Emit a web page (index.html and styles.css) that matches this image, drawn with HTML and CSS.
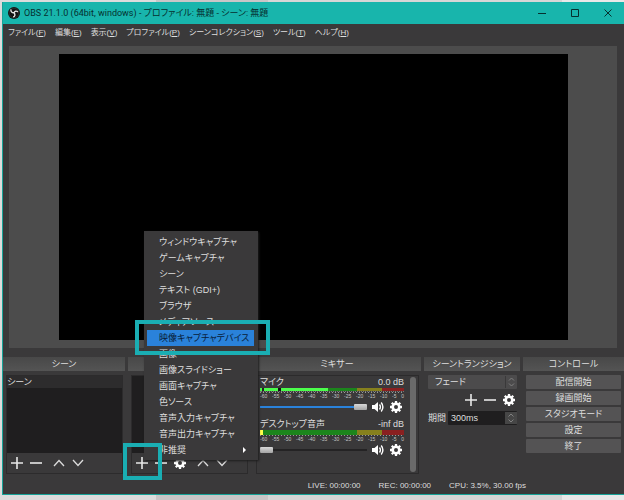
FILE: index.html
```html
<!DOCTYPE html>
<html lang="ja">
<head>
<meta charset="utf-8">
<meta name="viewport" content="width=device-width, initial-scale=1">
<title>OBS 21.1.0</title>
<link rel="stylesheet" href="styles.css">
</head>
<body>
<svg class="sprite" aria-hidden="true">
  <symbol id="plus" viewBox="0 0 12 12"><path d="M6 0v12M0 6h12" fill="none" stroke="#e8e8e8" stroke-width="1.6"/></symbol>
  <symbol id="minus" viewBox="0 0 12 12"><path d="M0 6h12" fill="none" stroke="#e8e8e8" stroke-width="1.6"/></symbol>
  <symbol id="up" viewBox="0 0 12 12"><path d="M1 9l5-5.500 5 5.500" fill="none" stroke="#dcdcdc" stroke-width="1.300"/></symbol>
  <symbol id="down" viewBox="0 0 12 12"><path d="M1 3l5 5.500 5-5.500" fill="none" stroke="#dcdcdc" stroke-width="1.300"/></symbol>
  <symbol id="gear" viewBox="0 0 12 12"><circle cx="6" cy="6" r="3.300" fill="none" stroke="#fff" stroke-width="2.600"/><path d="M6 0v2M6 10v2M0 6h2M10 6h2M1.800 1.800l1.400 1.400M8.800 8.800l1.400 1.400M1.800 10.200l1.400-1.400M8.800 3.200l1.400-1.400" stroke="#fff" stroke-width="2.300"/></symbol>
  <symbol id="speaker" viewBox="0 0 12 12"><path d="M0 4h2.500L6 1v10L2.500 8H0z" fill="#fff"/><path d="M7.500 3.500q1.800 2.500 0 5M9.200 1.500q3.400 4.500 0 9" fill="none" stroke="#fff" stroke-width="1.400"/></symbol>
  <symbol id="spin" viewBox="0 0 8 12"><path d="M1.500 4.500L4 2l2.500 2.500M1.500 7.500L4 10l2.500-2.500" fill="none" stroke="#808080"/></symbol>
</svg>

<div class="window">
  <header class="titlebar">
    <svg class="logo" viewBox="0 0 12 12" aria-hidden="true"><circle cx="6" cy="6" r="6" fill="#111"/><circle cx="6" cy="6" r="4.800" fill="none" stroke="#3c3c3c" stroke-width=".6"/><path d="M3 2.300c-.4 2.200.7 3.500 3 3.500M9.900 4.800C8.200 3.700 6.700 4 6 5.800M5.200 10c1.900-.7 2.300-2.300.8-4.200" fill="none" stroke="#e4e4e4" stroke-width="1.400"/></svg>
    <h1>OBS 21.1.0 (64bit, windows) - プロファイル: 無題 - シーン: 無題</h1>
    <button aria-label="最小化"><svg viewBox="0 0 8 8"><path d="M0 4.500h8"/></svg></button>
    <button aria-label="最大化"><svg viewBox="0 0 8 8"><path d="M.5.5h7v7h-7z"/></svg></button>
    <button aria-label="閉じる"><svg viewBox="0 0 8 8"><path d="M.5.500l7 7M7.500.500l-7 7"/></svg></button>
  </header>

  <nav class="menubar">
    <a href="#">ファイル(<u>F</u>)</a>
    <a href="#">編集(<u>E</u>)</a>
    <a href="#">表示(<u>V</u>)</a>
    <a href="#">プロファイル(<u>P</u>)</a>
    <a href="#">シーンコレクション(<u>S</u>)</a>
    <a href="#">ツール(<u>T</u>)</a>
    <a href="#">ヘルプ(<u>H</u>)</a>
  </nav>

  <main class="preview"><div class="canvas"></div></main>

  <div class="docks">
    <section class="dock">
      <h2>シーン</h2>
      <div class="frame">
        <ul class="list"><li>シーン</li></ul>
        <div class="tools">
          <button aria-label="追加"><svg><use href="#plus"/></svg></button>
          <button aria-label="削除"><svg><use href="#minus"/></svg></button>
          <button class="apart" aria-label="上へ"><svg><use href="#up"/></svg></button>
          <button aria-label="下へ"><svg><use href="#down"/></svg></button>
        </div>
      </div>
    </section>

    <section class="dock" aria-label="ソース">
      <h2></h2>
      <div class="frame">
        <ul class="list"></ul>
        <div class="tools">
          <div class="add">
            <button aria-label="追加"><svg><use href="#plus"/></svg></button>
            <span class="mark mark-add"></span>
          </div>
          <button aria-label="削除"><svg><use href="#minus"/></svg></button>
          <button aria-label="設定"><svg><use href="#gear"/></svg></button>
          <button class="apart" aria-label="上へ"><svg><use href="#up"/></svg></button>
          <button aria-label="下へ"><svg><use href="#down"/></svg></button>
        </div>
      </div>
      <ul class="popup">
        <li><button>ウィンドウキャプチャ</button></li>
        <li><button>ゲームキャプチャ</button></li>
        <li><button>シーン</button></li>
        <li><button>テキスト (GDI+)</button></li>
        <li><button>ブラウザ</button></li>
        <li><button>メディアソース</button></li>
        <li class="picked"><button>映像キャプチャデバイス</button><span class="mark mark-item"></span></li>
        <li><button>画像</button></li>
        <li><button>画像スライドショー</button></li>
        <li><button>画面キャプチャ</button></li>
        <li><button>色ソース</button></li>
        <li><button>音声入力キャプチャ</button></li>
        <li><button>音声出力キャプチャ</button></li>
        <li><button class="more">非推奨</button></li>
      </ul>
    </section>

    <section class="dock">
      <h2>ミキサー</h2>
      <div class="frame mixer">
        <div class="channels">
          <div class="channel">
            <div class="name"><label for="mic">マイク</label><output>0.0 dB</output></div>
            <div class="meter live"><i class="lit"></i><i class="green"></i><i class="olive"></i><i class="red"></i></div>
            <div class="scale"><span>-60</span><span>-55</span><span>-50</span><span>-45</span><span>-40</span><span>-35</span><span>-30</span><span>-25</span><span>-20</span><span>-15</span><span>-10</span><span>-5</span><span>0</span></div>
            <div class="volume">
              <input id="mic" class="full" type="range" value="100">
              <button aria-label="ミュート"><svg><use href="#speaker"/></svg></button>
              <button aria-label="設定"><svg><use href="#gear"/></svg></button>
            </div>
          </div>
          <div class="channel">
            <div class="name"><label for="desk">デスクトップ音声</label><output>-inf dB</output></div>
            <div class="meter idle"><i class="peak"></i><i class="green"></i><i class="olive"></i><i class="red"></i></div>
            <div class="scale"><span>-60</span><span>-55</span><span>-50</span><span>-45</span><span>-40</span><span>-35</span><span>-30</span><span>-25</span><span>-20</span><span>-15</span><span>-10</span><span>-5</span><span>0</span></div>
            <div class="volume">
              <input id="desk" type="range" value="0">
              <button aria-label="ミュート"><svg><use href="#speaker"/></svg></button>
              <button aria-label="設定"><svg><use href="#gear"/></svg></button>
            </div>
          </div>
        </div>
        <div class="scrollbar"></div>
      </div>
    </section>

    <section class="dock">
      <h2>シーントランジション</h2>
      <div class="transition">
        <div class="field drop"><select aria-label="トランジション"><option>フェード</option></select><svg><use href="#spin"/></svg></div>
        <div class="tools end">
          <button aria-label="追加"><svg><use href="#plus"/></svg></button>
          <button aria-label="削除"><svg><use href="#minus"/></svg></button>
          <button aria-label="設定"><svg><use href="#gear"/></svg></button>
        </div>
        <div class="duration">
          <label for="ms">期間</label>
          <div class="field"><input id="ms" type="text" value="300ms"><svg><use href="#spin"/></svg></div>
        </div>
      </div>
    </section>

    <section class="dock">
      <h2>コントロール</h2>
      <div class="controls">
        <button>配信開始</button>
        <button>録画開始</button>
        <button>スタジオモード</button>
        <button>設定</button>
        <button>終了</button>
      </div>
    </section>
  </div>

  <footer class="status"><span>LIVE: 00:00:00</span><span>REC: 00:00:00</span><span>CPU: 3.5%, 30.00 fps</span></footer>
</div>
</body>
</html>
```

FILE: styles.css
```css
* { box-sizing: border-box; }

body {
  margin: 0;
  min-height: 100vh;
  padding: 2px 0 5px 2px;
  display: flex;
  background: linear-gradient(90deg, #dcdcdc 0 25%, #c9c6c7 25% 43%, #d6d6d6 43% 90%, #e8e8e8 90%);
  color: #dedede;
  font: 9px/12px "Liberation Sans", "Noto Sans CJK JP", sans-serif;
  font-feature-settings: "palt";
}

h1, h2, ul { margin: 0; padding: 0; font-weight: 400; list-style: none; }

button, input, select {
  margin: 0;
  padding: 0;
  border: 0;
  background: none;
  color: inherit;
  font: inherit;
  font-feature-settings: inherit;
}

svg { display: block; width: 12px; height: 12px; }
.sprite { position: absolute; width: 0; height: 0; }

.window {
  flex: 1;
  min-width: 0;
  display: flex;
  flex-direction: column;
  background: #3a393a;
  border-left: 1px solid #17a398;
  border-bottom: 1px solid #17a398;
}

.titlebar {
  display: flex;
  align-items: center;
  height: 22px;
  padding-left: 5px;
  background: #18b5ac;
  color: #06302f;
}
.titlebar h1 {
  flex: 1;
  padding-left: 4px;
  font: 9px/12px Roboto, "Noto Sans CJK JP", sans-serif;
  font-feature-settings: "palt";
  white-space: nowrap;
}
.titlebar button { width: 33px; height: 22px; display: grid; place-items: center; }
.titlebar button svg { width: 8px; height: 8px; fill: none; stroke: #06302f; }

.menubar {
  display: flex;
  gap: 9px;
  height: 22px;
  padding: 3px 5px;
  font-size: 8px;
}
.menubar a { color: inherit; text-decoration: none; white-space: nowrap; }

.preview {
  flex: 1;
  display: flex;
  margin: 0 7px 0 6px;
  padding: 8px 49px 8px 50px;
  background: #4c4c4c;
}
.canvas { flex: 1; background: #000; }

.docks {
  display: grid;
  grid-template-columns: 122fr 122fr 168fr 96fr 101fr;
  gap: 3px;
  height: 117px;
  margin-top: 9px;
}
.dock { position: relative; display: flex; flex-direction: column; min-width: 0; }
.dock h2 {
  height: 14px;
  margin-bottom: 4px;
  background: linear-gradient(#484848, #545454);
  font-size: 9px;
  line-height: 14px;
  text-align: center;
  white-space: nowrap;
}

.frame {
  flex: 1;
  min-height: 0;
  display: flex;
  flex-direction: column;
  margin: 0 2px 0 3px;
  border: 1px solid #2c2b2c;
}
.list { flex: 1; background: #1f1e1f; }
.list li { background: #2d2c2d; }

.tools { display: flex; gap: 7px; height: 20px; padding: 4px; }
.tools button { height: 12px; }
.tools .apart { margin-left: 4px; }
.tools.end { justify-content: flex-end; padding: 5px 2px 3px; }
.add { position: relative; }

.mark { position: absolute; pointer-events: none; border: 4px solid #1aaeb3; z-index: 3; }
.mark-add { inset: -14px -14px -11px -13px; }
.mark-item { inset: -10px -16px -9px -12px; }

.popup {
  position: absolute;
  z-index: 1;
  left: 16px;
  bottom: 14px;
  width: 114px;
  padding: 3px 4px 2px 3px;
  background: #3a393a;
  box-shadow: 1px 1px 2px #1c1c1c;
}
.popup li { position: relative; }
.popup button {
  display: block;
  width: 100%;
  height: 16px;
  padding-left: 12px;
  line-height: 16px;
  text-align: left;
  white-space: nowrap;
}
.popup .picked > button { background: #2a82da; color: #081c38; }
.popup .more {
  display: flex;
  align-items: center;
  justify-content: space-between;
  padding-right: 8px;
}
.popup .more::after { content: ""; border: 3px solid transparent; border-left-color: #fff; border-right: 0; }

.mixer { flex-direction: row; padding: 0 2px; }
.channels { flex: 1; min-width: 0; display: flex; flex-direction: column; gap: 4px; padding-right: 6px; }
.channel { padding-left: 1px; }
.name { display: flex; justify-content: space-between; white-space: nowrap; }
.meter { display: flex; height: 5px; }
.meter.live { height: 4px; border-bottom: 1px dotted #777; }
.meter i { background: #14801a; }
.meter .lit {
  width: 47%;
  background: linear-gradient(90deg, #4cff4c 0 3%, #222 3% 6%, #4cff4c 6% 27%, #111 27% 31%, #4cff4c 31%);
}
.meter .peak { width: 2%; background: #ffff4c; }
.meter .green { flex: 1; background: #1c851c; }
.meter .olive { width: 18%; background: #86801d; }
.meter .red { width: 15%; background: #8a2020; }
.scale {
  display: flex;
  justify-content: space-between;
  height: 8px;
  background: repeating-linear-gradient(90deg, #999 0 1px, transparent 1px 3px) 0 0 / 100% 1px no-repeat;
  font-size: 5px;
  line-height: 9px;
  color: #c4c4c4;
}
.volume { display: flex; align-items: center; gap: 6px; height: 14px; padding-right: 2px; }
.volume input {
  appearance: none;
  flex: 1;
  min-width: 0;
  height: 14px;
  margin-right: -1px;
  background: linear-gradient(#242324, #242324) 0 6px / 100% 2px no-repeat;
}
.volume .full { background-image: linear-gradient(#2a82da, #2a82da); }
.volume input::-webkit-slider-thumb {
  appearance: none;
  width: 13px;
  height: 6px;
  border-radius: 1px;
  background: linear-gradient(#d8d8d8, #a4a4a4);
}
.scrollbar { width: 6px; margin: 1px 0; border-radius: 3px; background: #6a6a6a; }

.transition { padding: 0 3px 0 4px; }
.field {
  flex: 1;
  min-width: 0;
  display: flex;
  align-items: center;
  height: 14px;
  background: #1f1e1f;
  border-radius: 1px;
}
.field svg { width: 12px; flex: none; background: #464646; }
.field input, .field select { appearance: none; flex: 1; min-width: 0; padding-left: 3px; }
.field.drop { background: #4c4b4c; }
.field.drop select { padding-left: 7px; }
.field.drop svg { background: none; border-left: 1px solid #3a393a; }
.duration { display: flex; align-items: center; gap: 2px; margin-top: 2px; white-space: nowrap; }

.controls { display: flex; flex-direction: column; gap: 2px; padding: 0 3px; }
.controls button { height: 14px; line-height: 14px; background: #545354; border-radius: 1px; }

.status {
  display: flex;
  justify-content: flex-end;
  gap: 18px;
  height: 20px;
  padding: 6px 98px 0 0;
  font-size: 8px;
  white-space: nowrap;
}
```
